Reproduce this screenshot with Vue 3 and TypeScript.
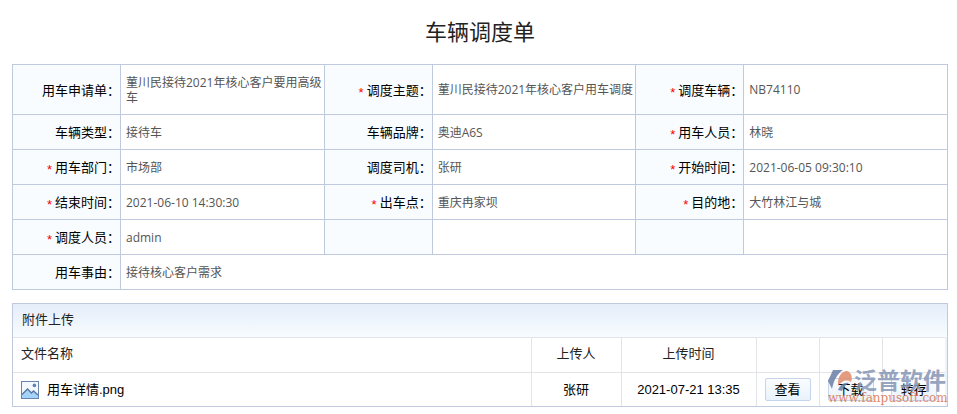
<script setup lang="ts">
interface Field {
  label: string
  value: string
  required?: boolean
  span?: number
}

interface Attachment {
  name: string
  uploader: string
  time: string
}

const rows: Field[][] = [
  [
    { label: '用车申请单', value: '菫川民接待2021年核心客户要用高级车' },
    { label: '调度主题', value: '菫川民接待2021年核心客户用车调度', required: true },
    { label: '调度车辆', value: 'NB74110', required: true },
  ],
  [
    { label: '车辆类型', value: '接待车' },
    { label: '车辆品牌', value: '奥迪A6S' },
    { label: '用车人员', value: '林晓', required: true },
  ],
  [
    { label: '用车部门', value: '市场部', required: true },
    { label: '调度司机', value: '张研' },
    { label: '开始时间', value: '2021-06-05 09:30:10', required: true },
  ],
  [
    { label: '结束时间', value: '2021-06-10 14:30:30', required: true },
    { label: '出车点', value: '重庆冉家坝', required: true },
    { label: '目的地', value: '大竹林江与城', required: true },
  ],
  [
    { label: '调度人员', value: 'admin', required: true },
    { label: '', value: '' },
    { label: '', value: '' },
  ],
  [{ label: '用车事由', value: '接待核心客户需求', span: 5 }],
]

const attachments: Attachment[] = [
  { name: '用车详情.png', uploader: '张研', time: '2021-07-21 13:35' },
]

const actions: string[] = ['查看', '下载', '转存']
</script>

<template>
  <main class="page">
    <h1 class="title">车辆调度单</h1>

    <table class="form">
      <colgroup>
        <col class="col-label" /><col />
        <col class="col-label" /><col />
        <col class="col-label" /><col />
      </colgroup>
      <tbody>
        <tr v-for="(row, r) in rows" :key="r">
          <template v-for="(field, f) in row" :key="f">
            <th scope="row">
              <span v-if="field.required" class="star">*</span>
              <span v-if="field.label">{{ field.label }}：</span>
            </th>
            <td :colspan="field.span">{{ field.value }}</td>
          </template>
        </tr>
      </tbody>
    </table>

    <section class="files">
      <h2 class="files-title">附件上传</h2>
      <div class="file-wrap">
        <table class="file-table">
          <colgroup>
            <col />
            <col class="col-user" />
            <col class="col-time" />
            <col v-for="action in actions" :key="action" class="col-action" />
          </colgroup>
          <thead>
            <tr>
              <th class="name">文件名称</th>
              <th>上传人</th>
              <th>上传时间</th>
              <td v-for="action in actions" :key="action"></td>
            </tr>
          </thead>
          <tbody>
            <tr v-for="file in attachments" :key="file.name">
              <td class="name">
                <span class="file">
                  <svg class="thumb" viewBox="0 0 18 18" aria-hidden="true">
                    <rect x="0.5" y="0.5" width="17" height="17" fill="#f4f9fe" stroke="#6886ad" />
                    <path d="M1 13.5 6.5 8 10.5 12 12.5 10 17 14V17H1Z" fill="#a5d2f8" />
                    <path d="M1 13.5 6.5 8 10.5 12 12.5 10 17 14" fill="none" stroke="#55779f" stroke-width="1.4" />
                    <circle cx="13.4" cy="4.4" r="1.8" fill="#5d83ae" />
                  </svg>
                  <span>{{ file.name }}</span>
                </span>
              </td>
              <td>{{ file.uploader }}</td>
              <td>{{ file.time }}</td>
              <td v-for="action in actions" :key="action">
                <button type="button" class="btn">{{ action }}</button>
              </td>
            </tr>
          </tbody>
        </table>
      </div>
      <div class="watermark">
        <div class="brand">
          <svg class="logo" viewBox="0 0 25 24" aria-hidden="true">
            <path d="M5 1H15C9 5 6 11 4 20L0 12Z" fill="#6b7fa6" />
            <path d="M10 14C10 7 14 2 19 2 23 3 25 8 23 13 18 10 14 12 10 17Z" fill="#e08b6c" />
            <path d="M10 21C12 16 16 13 21 14 17 16 15 19 14 22Z" fill="#6b7fa6" />
          </svg>
          <span>泛普软件</span>
        </div>
        <div class="site">www.fanpusoft.com</div>
      </div>
    </section>
  </main>
</template>

<style>
body {
  background: #fff;
}
</style>

<style scoped>
.page {
  padding: 16px 9px 7px 12px;
  font-family: "Open Sans", "Noto Sans CJK SC", sans-serif;
  color: #000;
}

.title {
  margin: 0 0 18px;
  font-size: 22px;
  line-height: 30px;
  font-weight: 400;
  text-align: center;
  color: #222;
}

table {
  width: 100%;
  border-collapse: collapse;
  table-layout: fixed;
}

.col-label {
  width: 108px;
}

.form th,
.form td {
  height: 34px;
  padding: 0;
  border: 1px solid #bfcade;
}

.form tr:first-child td {
  height: 49px;
}

.form th {
  background: #f8fcff;
  font-size: 13px;
  line-height: 18px;
  font-weight: 400;
  text-align: right;
  white-space: nowrap;
}

.form td {
  padding-left: 5px;
  font-size: 12px;
  line-height: 15px;
  color: #555;
}

.star {
  margin-right: 3px;
  font-family: "Liberation Sans", sans-serif;
  line-height: 1;
  vertical-align: -2px;
  color: #f00;
}

.files {
  position: relative;
  margin-top: 13px;
  border: 1px solid #bfcade;
  font-family: "Liberation Sans", "Noto Sans CJK SC", sans-serif;
}

.files-title {
  margin: 0;
  padding: 0 9px 2px;
  font-size: 13px;
  line-height: 31px;
  font-weight: 400;
  color: #222;
  background: linear-gradient(#e5edfa, #f8fcff);
}

.file-wrap {
  padding-right: 2px;
  background: #edf3fc;
}

.file-table {
  background: #fff;
}

.col-user {
  width: 90px;
}

.col-time {
  width: 135px;
}

.col-action {
  width: 63px;
}

.file-table th,
.file-table td {
  height: 34px;
  padding: 0;
  border-left: 1px solid #e2e4e8;
  border-top: 1px solid #e2e4e8;
  font-size: 13px;
  line-height: 18px;
  font-weight: 400;
  text-align: center;
}

.file-table thead th {
  height: 32px;
  padding-bottom: 2px;
}

.file-table tbody td {
  height: 33px;
}

.file-table th {
  color: #222;
}

.file-table .name {
  padding-left: 8px;
  border-left: 0;
  text-align: left;
}

.file {
  display: flex;
  align-items: center;
  gap: 8px;
}

.thumb {
  width: 18px;
  height: 18px;
}

.btn {
  width: 46px;
  height: 23px;
  padding: 0;
  border: 1px solid #c6d5ec;
  border-radius: 2px;
  background: linear-gradient(#fbfdff, #e8f2fc);
  font: inherit;
  line-height: 20px;
  color: #000;
}

.watermark {
  position: absolute;
  right: 0;
  bottom: 2px;
  width: 119px;
  opacity: 0.85;
  pointer-events: none;
}

.brand {
  display: flex;
  align-items: center;
  gap: 1px;
  font-size: 23px;
  line-height: 24px;
  font-weight: 700;
  white-space: nowrap;
  color: #8796b6;
}

.logo {
  flex: none;
  width: 25px;
  height: 24px;
}

.site {
  font-family: "DejaVu Serif", serif;
  font-size: 12px;
  line-height: 11px;
  color: #dc7450;
}
</style>
